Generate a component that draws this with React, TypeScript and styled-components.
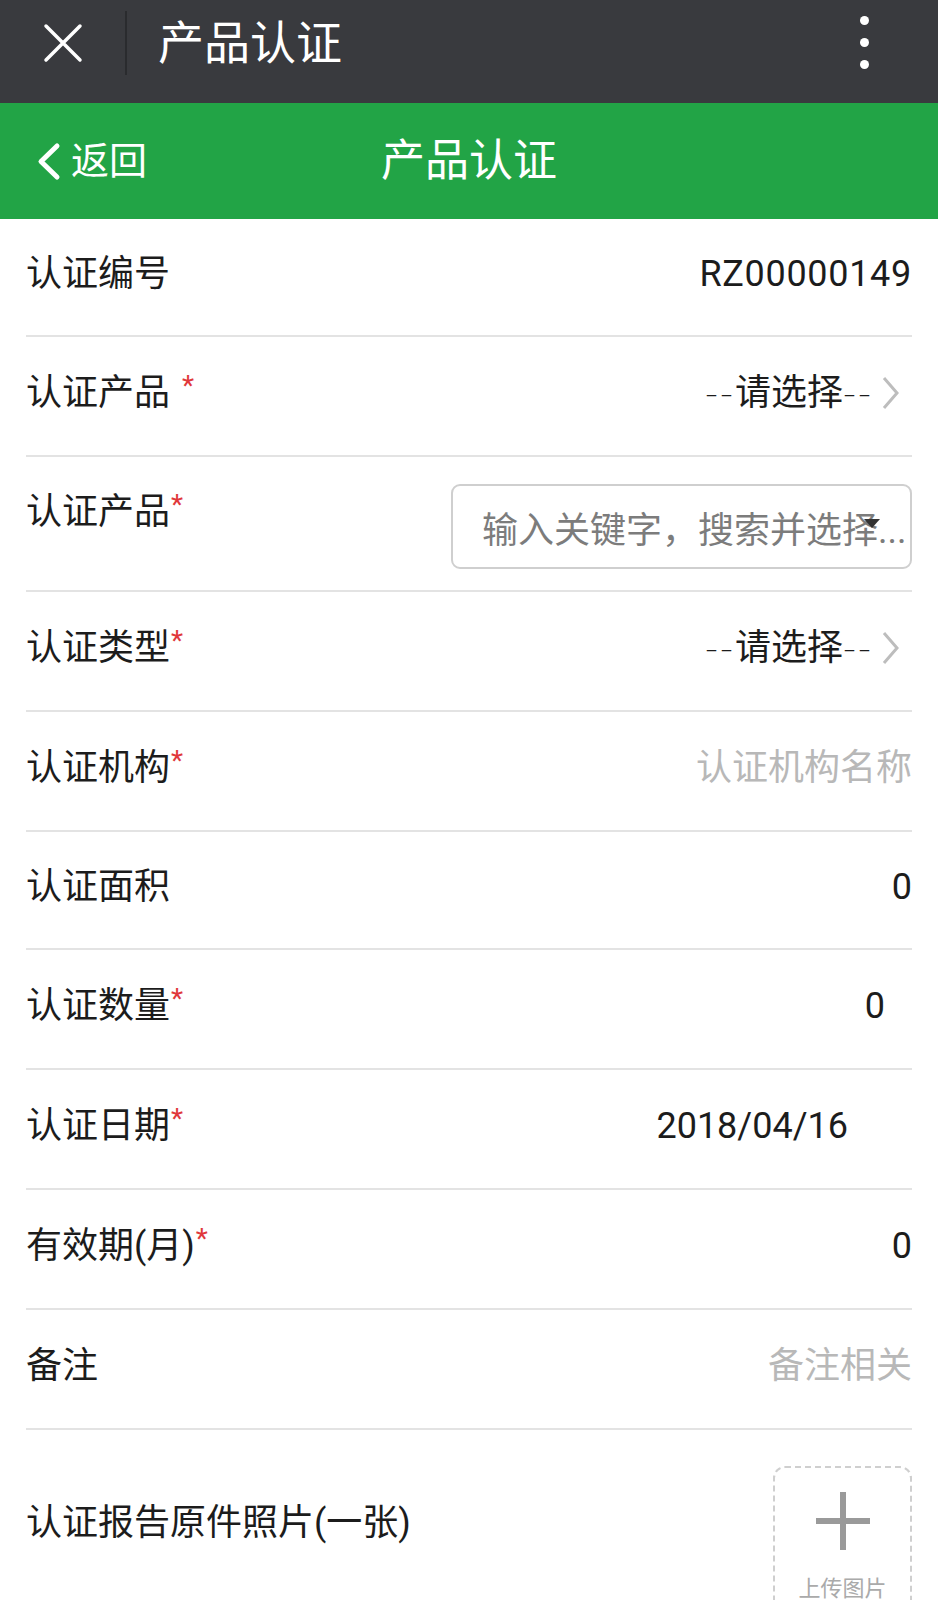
import React from 'react'
import styled, { createGlobalStyle } from 'styled-components'

const GlobalStyle = createGlobalStyle`
  body {
    margin: 0;
    background: #fff;
    font-family: Roboto, "Noto Sans CJK SC", sans-serif;
    color: #1c1c1c;
  }
  * { box-sizing: border-box; }
`

const SelectValue = () => (
  <Select>
    <span>
      <Dashes>--</Dashes>请选择<Dashes>--</Dashes>
    </span>
    <Chevron viewBox="0 0 18 34">
      <polyline points="2,2 15,17 2,32" fill="none" stroke="#bdbdbd" strokeWidth="3" />
    </Chevron>
  </Select>
)

const App = () => {
  return (
    <Page>
      <GlobalStyle />
      <TopBar>
        <CloseIcon viewBox="0 0 40 40">
          <path d="M3 3 L37 37 M37 3 L3 37" stroke="#fff" strokeWidth="3.5" strokeLinecap="round" />
        </CloseIcon>
        <TopDivider />
        <TopTitle>产品认证</TopTitle>
        <Dots>
          <Dot />
          <Dot />
          <Dot />
        </Dots>
      </TopBar>

      <NavBar>
        <Back>
          <BackIcon viewBox="0 0 25 39">
            <polyline points="21,4 5,19.5 21,35" fill="none" stroke="#fff" strokeWidth="5" strokeLinejoin="round" strokeLinecap="round" />
          </BackIcon>
          <span>返回</span>
        </Back>
        <NavTitle>产品认证</NavTitle>
        <span />
      </NavBar>

      <Form>
        <Row $h={118}>
          <Label>认证编号</Label>
          <Value $wide>RZ00000149</Value>
        </Row>

        <Row>
          <Label>认证产品<Star $gap>*</Star></Label>
          <SelectValue />
        </Row>

        <Row $h={135} $top>
          <Label $offset={4}>认证产品<Star>*</Star></Label>
          <SearchBox>
            输入关键字，搜索并选择...
            <Caret />
          </SearchBox>
        </Row>

        <Row>
          <Label>认证类型<Star>*</Star></Label>
          <SelectValue />
        </Row>

        <Row>
          <Label>认证机构<Star>*</Star></Label>
          <Value $muted>认证机构名称</Value>
        </Row>

        <Row $h={118}>
          <Label>认证面积</Label>
          <Value>0</Value>
        </Row>

        <Row>
          <Label>认证数量<Star>*</Star></Label>
          <Value $inset={27}>0</Value>
        </Row>

        <Row>
          <Label>认证日期<Star>*</Star></Label>
          <Value $inset={64}>2018/04/16</Value>
        </Row>

        <Row>
          <Label>有效期(月)<Star>*</Star></Label>
          <Value>0</Value>
        </Row>

        <Row>
          <Label>备注</Label>
          <Value $muted>备注相关</Value>
        </Row>

        <UploadRow>
          <Label $offset={33}>认证报告原件照片(一张)</Label>
          <Upload>
            <PlusIcon viewBox="0 0 54 58">
              <rect x="0" y="26" width="54" height="6" fill="#9a9a9a" />
              <rect x="24" y="0" width="6" height="58" fill="#9a9a9a" />
            </PlusIcon>
            <UploadText>上传图片</UploadText>
          </Upload>
        </UploadRow>
      </Form>
    </Page>
  )
}

export default App

const Page = styled.div`
  width: 938px;
  height: 1600px;
  overflow: hidden;
  background: #fff;
`
const TopBar = styled.div`
  height: 103px;
  background: #393a3e;
  display: flex;
  align-items: center;
  padding: 0 0 18px 43px;
`
const CloseIcon = styled.svg`
  width: 40px;
  height: 40px;
  flex-shrink: 0;
`
const TopDivider = styled.div`
  width: 2px;
  height: 64px;
  margin-left: 42px;
  background: #2a2b2e;
`
const TopTitle = styled.div`
  margin-left: 31px;
  font-size: 46px;
  line-height: 56px;
  color: #fff;
`
const Dots = styled.div`
  margin-left: auto;
  margin-right: 69px;
  display: flex;
  flex-direction: column;
  gap: 13px;
`
const Dot = styled.div`
  width: 9px;
  height: 9px;
  border-radius: 50%;
  background: #fff;
`
const NavBar = styled.div`
  height: 116px;
  background: #22a446;
  display: grid;
  grid-template-columns: 1fr auto 1fr;
  align-items: center;
  color: #fff;
`
const Back = styled.div`
  display: flex;
  align-items: center;
  padding-left: 36px;
  font-size: 38px;
  line-height: 48px;
  span { margin-left: 10px; }
`
const BackIcon = styled.svg`
  width: 25px;
  height: 39px;
`
const NavTitle = styled.div`
  font-size: 44px;
  line-height: 56px;
`
const Form = styled.div`
  display: flex;
  flex-direction: column;
`
const Row = styled.div<{ $h?: number; $top?: boolean }>`
  height: ${p => p.$h ?? 120}px;
  margin: 0 26px;
  border-bottom: 2px solid #e3e3e3;
  display: flex;
  justify-content: space-between;
  align-items: ${p => (p.$top ? 'flex-start' : 'center')};
  padding: ${p => (p.$top ? '27px 0 0' : '0 0 6px')};
`
const Label = styled.div<{ $offset?: number }>`
  font-size: 36px;
  line-height: 48px;
  color: #1c1c1c;
  white-space: nowrap;
  margin-top: ${p => p.$offset ?? 0}px;
`
const Star = styled.span<{ $gap?: boolean }>`
  display: inline-block;
  vertical-align: top;
  padding-top: 3px;
  margin-left: ${p => (p.$gap ? 12 : 1)}px;
  font-size: 28px;
  line-height: 28px;
  color: #e0383b;
`
const Value = styled.div<{ $muted?: boolean; $inset?: number; $wide?: boolean }>`
  font-size: 36px;
  line-height: 48px;
  color: ${p => (p.$muted ? '#b8b8b8' : '#1c1c1c')};
  margin-right: ${p => p.$inset ?? 0}px;
  letter-spacing: ${p => (p.$wide ? '0.7px' : '0')};
`
const Select = styled.div`
  display: flex;
  align-items: center;
  gap: 9px;
  margin-right: 12px;
  font-size: 36px;
  line-height: 48px;
  color: #1c1c1c;
`
const Dashes = styled.span`
  font-family: "DejaVu Sans", sans-serif;
  font-weight: 300;
  letter-spacing: 2px;
`
const Chevron = styled.svg`
  width: 18px;
  height: 34px;
`
const SearchBox = styled.div`
  position: relative;
  width: 461px;
  height: 85px;
  border: 2px solid #cfcfcf;
  border-radius: 9px;
  padding: 0 0 0 29px;
  display: flex;
  align-items: center;
  font-size: 36px;
  color: #7c7c7c;
  white-space: nowrap;
  overflow: hidden;
`
const Caret = styled.div`
  position: absolute;
  left: 411px;
  top: 33px;
  width: 0;
  height: 0;
  border-left: 8px solid transparent;
  border-right: 8px solid transparent;
  border-top: 9px solid #333;
`
const UploadRow = styled.div`
  margin: 0 26px;
  padding-top: 36px;
  display: flex;
  justify-content: space-between;
  align-items: flex-start;
`
const Upload = styled.div`
  width: 139px;
  height: 150px;
  border: 2px dashed #cfcfcf;
  border-radius: 12px;
  display: flex;
  flex-direction: column;
  align-items: center;
  padding-top: 24px;
`
const PlusIcon = styled.svg`
  width: 54px;
  height: 58px;
`
const UploadText = styled.div`
  margin-top: 24px;
  font-size: 22px;
  line-height: 30px;
  color: #aaa;
`
